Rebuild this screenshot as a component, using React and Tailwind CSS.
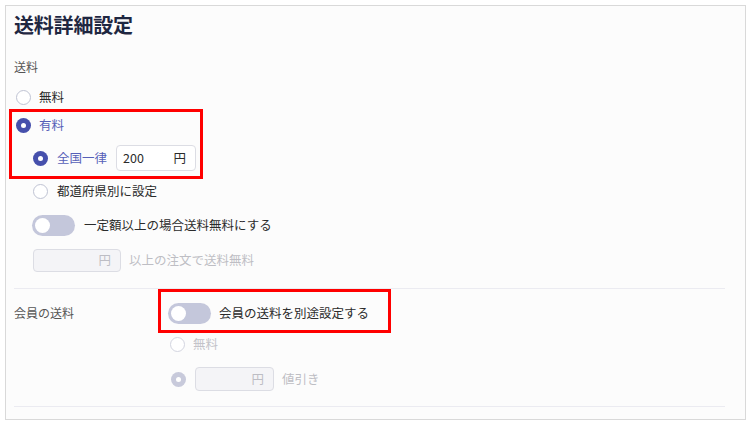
import React from 'react';

const font = { fontFamily: '"Noto Sans CJK JP", "Noto Sans", sans-serif' };

const Radio = ({ checked = false, disabled = false }) =>
  checked ? (
    <span
      className={`w-[15px] h-[15px] rounded-full flex items-center justify-center shrink-0 ${
        disabled ? 'bg-[#c8cadb]' : 'bg-[#4650ac]'
      }`}
    >
      <span className="w-[5px] h-[5px] rounded-full bg-white" />
    </span>
  ) : (
    <span
      className={`w-[15px] h-[15px] rounded-full border-[1.5px] bg-white shrink-0 ${
        disabled ? 'border-[#d3d5e0]' : 'border-[#bfc3d3]'
      }`}
    />
  );

const Toggle = () => (
  <span className="w-[43px] h-[21px] rounded-full bg-[#c4c7db] flex items-center px-[3px] shrink-0">
    <span className="w-[15px] h-[15px] rounded-full bg-white" />
  </span>
);

export default function App() {
  return (
    <div className="w-[753px] h-[426px] bg-white overflow-hidden" style={font}>
      <div className="mt-[5px] ml-[5px] w-[741px] h-[415px] border border-[#d9d9d9] bg-[#fcfcfc] px-[8px]">
        {/* Title */}
        <div className="h-[38px] flex items-center text-[20px] font-bold text-[#1f2741] tracking-[-0.2px]">
          送料詳細設定
        </div>

        {/* 送料 */}
        <div className="mt-[13px] h-[20px] flex items-center text-[12px] text-[#555]">送料</div>

        <div className="mt-[8px] h-[24px] flex items-center gap-[8px] pl-[2px] text-[12.5px] text-[#2b2b2b]">
          <Radio />
          <span>無料</span>
        </div>

        <div className="-ml-[5px] w-[194px] border-[3px] border-[#f00] pl-[4px] pb-[5px]">
          <div className="h-[26px] flex items-center gap-[8px] text-[12.5px] text-[#5660b8]">
            <Radio checked />
            <span>有料</span>
          </div>
          <div className="mt-[7px] h-[26px] flex items-center pl-[17px] text-[12.5px]">
            <Radio checked />
            <span className="ml-[9px] text-[#5660b8]">全国一律</span>
            <div className="ml-[9px] w-[80px] h-[26px] rounded-[4px] border border-[#dcdde4] bg-white flex items-center justify-between pl-[6px] pr-[9px] text-[#2b2b2b]">
              <span>200</span>
              <span>円</span>
            </div>
          </div>
        </div>

        <div className="mt-[1px] h-[22px] flex items-center gap-[9px] pl-[19px] text-[12.5px] text-[#2b2b2b]">
          <Radio />
          <span>都道府県別に設定</span>
        </div>

        <div className="mt-[12px] h-[22px] flex items-center gap-[9px] pl-[18px] text-[12.5px] text-[#2b2b2b]">
          <Toggle />
          <span>一定額以上の場合送料無料にする</span>
        </div>

        <div className="mt-[13px] h-[23px] flex items-center gap-[8px] pl-[19px] text-[12.5px]">
          <div className="w-[88px] h-[23px] rounded-[4px] border border-[#dcdde4] bg-[#f4f4f7] flex items-center justify-end pr-[9px] text-[#bdbdc4]">
            円
          </div>
          <span className="text-[#bebec4]">以上の注文で送料無料</span>
        </div>

        <div className="mt-[16px] w-[711px] h-px bg-[#ebebf1]" />

        {/* 会員の送料 */}
        <div className="flex">
          <div className="w-[144px] h-[44px] pt-[4px] flex items-center text-[12px] text-[#555]">
            会員の送料
          </div>
          <div className="flex flex-col">
            <div className="w-[233px] h-[44px] border-[3px] border-[#f00] pl-[7px] pt-[4px] flex items-center gap-[8px] text-[12.5px] text-[#2b2b2b]">
              <Toggle />
              <span>会員の送料を別途設定する</span>
            </div>
            <div className="h-[22px] flex items-center gap-[8px] pl-[12px] text-[12.5px] text-[#c3c3c9]">
              <Radio disabled />
              <span>無料</span>
            </div>
            <div className="mt-[12px] h-[24px] flex items-center pl-[13px] text-[12.5px]">
              <Radio checked disabled />
              <div className="ml-[9px] w-[79px] h-[24px] rounded-[4px] border border-[#dcdde4] bg-[#f4f4f7] flex items-center justify-end pr-[9px] text-[#bdbdc4]">
                円
              </div>
              <span className="ml-[8px] text-[#bebec4]">値引き</span>
            </div>
          </div>
        </div>

        <div className="mt-[15px] w-[711px] h-px bg-[#ebebf1]" />
      </div>
    </div>
  );
}
